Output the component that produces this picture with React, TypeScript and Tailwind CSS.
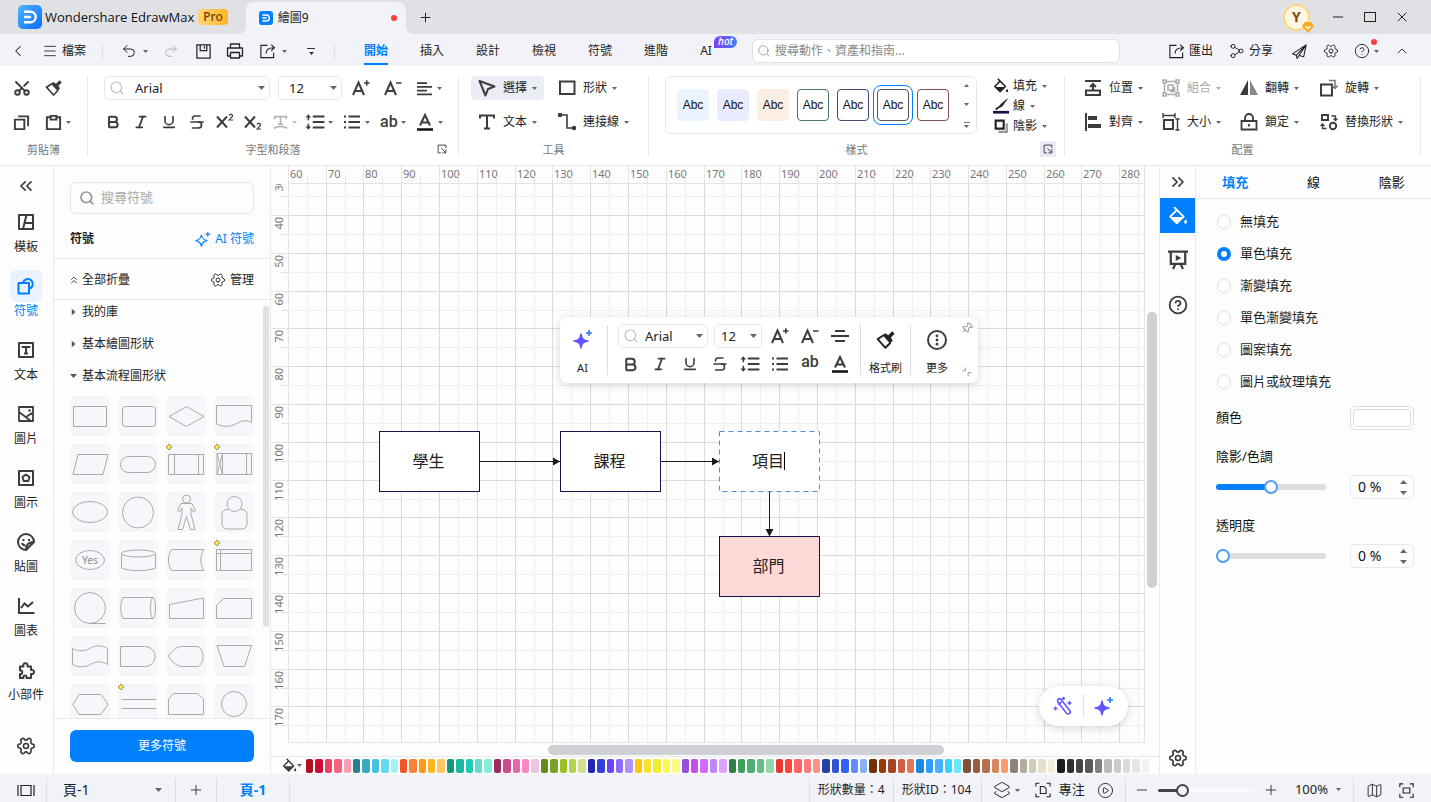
import { useState } from "react";
import type { ReactNode } from "react";
import clsx from "clsx";
import {
  Bold,
  ChevronLeft,
  ChevronsLeft,
  ChevronsRight,
  ChevronsUp,
  ChevronUp,
  CircleHelp,
  CirclePlay,
  Italic,
  Layers2,
  Map as MapIcon,
  Menu,
  Minus,
  Pin,
  Plus,
  Redo2,
  Scissors,
  Search,
  Settings,
  Share2,
  Strikethrough,
  Underline,
  Undo2,
  X,
} from "lucide-react";

/* ---------- small pieces ---------- */

type IconProps = { size?: number; width?: number; className?: string; children: ReactNode };

function Icon({ size = 18, width = 2, className, children }: IconProps) {
  return (
    <svg
      width={size}
      height={size}
      viewBox="0 0 18 18"
      fill="none"
      stroke="currentColor"
      strokeWidth={width}
      className={clsx("shrink-0", className)}
    >
      {children}
    </svg>
  );
}

function Caret({ up = false, big = false, className }: { up?: boolean; big?: boolean; className?: string }) {
  return (
    <svg
      width={big ? 7 : 5}
      height={big ? 4 : 3}
      viewBox="0 0 6 4"
      preserveAspectRatio="none"
      className={clsx("pointer-events-none shrink-0", className ?? "text-[#666]")}
    >
      <path d={up ? "M0 4L3 0L6 4z" : "M0 0h6L3 4z"} fill="currentColor" />
    </svg>
  );
}

function Divider({ className }: { className?: string }) {
  return <span className={clsx("w-px shrink-0 bg-[#dcdee6]", className)} />;
}

function Spark({ size = 20, outline = false }: { size?: number; outline?: boolean }) {
  const star = "M8 5C8.8 9.6 10.4 11.2 15 12C10.4 12.8 8.8 14.4 8 19C7.2 14.4 5.6 12.8 1 12C5.6 11.2 7.2 9.6 8 5z";
  const plus = "M16 1C16.3 3.2 16.8 3.7 19 4C16.8 4.3 16.3 4.8 16 7C15.7 4.8 15.2 4.3 13 4C15.2 3.7 15.7 3.2 16 1z";
  return (
    <svg width={size} height={size} viewBox="0 0 20 20" fill="none" className="shrink-0">
      <defs>
        <linearGradient id="spark" x1="0" y1="1" x2="1" y2="0">
          <stop offset="0" stopColor="#8a4bff" />
          <stop offset="1" stopColor="#3b5bff" />
        </linearGradient>
      </defs>
      {outline ? (
        <path d={star} stroke="#0080ff" strokeWidth="1.5" strokeLinejoin="round" />
      ) : (
        <path d={star} fill="url(#spark)" stroke="url(#spark)" strokeWidth="1.4" strokeLinejoin="round" />
      )}
      <path d={plus} fill="#2f7bff" stroke="#2f7bff" strokeWidth={outline ? 0.8 : 1} />
    </svg>
  );
}

function Logo({ size }: { size: number }) {
  return (
    <svg width={size} height={size} viewBox="0 0 24 24" className="shrink-0">
      <defs>
        <linearGradient id="logo" x1="0" y1="0" x2="1" y2="1">
          <stop offset="0" stopColor="#4db4ff" />
          <stop offset="1" stopColor="#0a6cff" />
        </linearGradient>
      </defs>
      <rect width="24" height="24" rx="5" fill={size > 20 ? "url(#logo)" : "#0080ff"} />
      <path d="M6 6.8h6.5a5.2 5.2 0 0 1 0 10.4H6M6 12h7" fill="none" stroke="#fff" strokeWidth="2.4" />
    </svg>
  );
}

function Brush({ size = 18 }: { size?: number }) {
  return (
    <Icon size={size} width={1.7}>
      <path d="M6.5 5L1.5 8.2L8.5 16L13 11.5" strokeLinejoin="round" />
      <path d="M5.8 4.6L8.4 3L11 4.8L14.6 1.2L16.8 3.4L13.4 6.8L15 9.6L12.6 12.2z" fill="currentColor" stroke="none" />
    </Icon>
  );
}

function Bucket({ size = 16 }: { size?: number }) {
  return (
    <Icon size={size} width={1.7}>
      <path d="M5.5 1L14 9.5L8 15.5L2 9.5L8 3.5" strokeLinejoin="round" />
      <path d="M2.5 10h11L8 15z" fill="currentColor" stroke="none" />
      <path d="M15.8 12c1 1.4 1.3 2 1.3 2.6a1.3 1.3 0 0 1-2.6 0c0-.6.4-1.2 1.3-2.6z" fill="currentColor" stroke="none" />
    </Icon>
  );
}

function FontGrow({ sign }: { sign: "plus" | "minus" }) {
  return (
    <Icon>
      <path d="M1 16L6.5 3.5L12 16M3 12h7" />
      <path d={sign === "plus" ? "M12 4h5.5M14.8 1.2v5.5" : "M12 4h5.5"} strokeWidth="1.5" />
    </Icon>
  );
}

function Script({ low = false }: { low?: boolean }) {
  return (
    <Icon>
      <path d="M1 3.5l10 11M11 3.5l-10 11" />
      <path
        d={low ? "M13 11.5c.5-1.7 4-1.5 3.5.5c-.3 1.2-2.5 2.5-3.5 4h4" : "M13 2.5c.5-1.7 4-1.5 3.5.5c-.3 1.2-2.5 2.5-3.5 4h4"}
        strokeWidth="1.2"
      />
    </Icon>
  );
}

function LineSpacing() {
  return (
    <Icon size={20} width={1.9}>
      <path d="M7 4h10.5M7 9h10.5M7 14h10.5" />
      <path d="M3 3.5v4M3 10.5v4" strokeWidth="1.4" />
      <path d="M.5 5L3 2L5.5 5zM.5 13L3 16L5.5 13z" fill="currentColor" stroke="none" />
    </Icon>
  );
}

function ListIcon() {
  return (
    <Icon width={1.8}>
      <path d="M5.5 3.5H17M5.5 9H17M5.5 14.5H17M1 3.5h2M1 9h2M1 14.5h2" />
    </Icon>
  );
}

function FontColor() {
  return (
    <Icon>
      <path d="M4 12.5L9 2L14 12.5M5.8 9.5h6.4" />
      <path d="M1 16.5h16" stroke="#111" strokeWidth="2.5" />
    </Icon>
  );
}

function ExportIcon() {
  return (
    <Icon size={17} width={1.2}>
      <path d="M9 2.5H2v13h13.5V10" />
      <path d="M7.5 11C7.5 7 10 5 16 5M13 1.8L16.3 5L13 8.2" />
    </Icon>
  );
}

function SelectBox(props: { label: string; value: string; search?: boolean; compact?: boolean; className: string }) {
  return (
    <div className={clsx("flex h-6 items-center rounded-[5px] border border-[#e6e7ec] bg-white pr-1", props.className)}>
      {props.search && <Search size={16} strokeWidth={1.6} className="ml-1 shrink-0 text-[#bbb]" />}
      <select
        aria-label={props.label}
        defaultValue={props.value}
        className={clsx(
          "min-w-0 flex-1 appearance-none bg-transparent text-[13px] leading-5 text-[#222] outline-none",
          props.compact ? "pl-1.5" : "pl-2.5",
        )}
      >
        <option>{props.value}</option>
      </select>
      <Caret big />
    </div>
  );
}

/* ---------- title and menu bars ---------- */

function TitleBar() {
  return (
    <header className="flex h-[34px] shrink-0 items-center bg-[#e0e1e5] pl-[18px]">
      <Logo size={24} />
      <span className="ml-[3px] font-['Open_Sans'] text-[13px] leading-5 text-[#111]">Wondershare EdrawMax</span>
      <span className="ml-1 h-4 rounded bg-[linear-gradient(90deg,#ffd778,#ffb526)] px-[5px] text-xs leading-4 font-medium text-[#6b3d00]">
        Pro
      </span>
      <div className="relative ml-[18px] flex h-8 w-40 items-center gap-[5px] self-end rounded-t-lg bg-[#f2f3f9] px-[13px] pr-[9px] text-xs text-[#222] before:absolute before:bottom-0 before:-left-2 before:size-2 before:bg-[radial-gradient(circle_at_0_0,#e0e1e5_8px,#f2f3f9_8px)] after:absolute after:-right-2 after:bottom-0 after:size-2 after:bg-[radial-gradient(circle_at_100%_0,#e0e1e5_8px,#f2f3f9_8px)]">
        <Logo size={14} />
        <span>繪圖9</span>
        <span className="ml-auto size-1.5 rounded-full bg-[#ff3b3b]" />
      </div>
      <button type="button" aria-label="新增分頁" className="ml-3 text-[#222]">
        <Plus size={15} strokeWidth={1.6} />
      </button>
      <div className="ml-auto flex items-center">
        <button
          type="button"
          className="relative mr-3 size-[27px] rounded-full border-2 border-[#ffd57c] bg-[#fff7e2] text-sm leading-[22px] font-bold text-[#7a4a12]"
        >
          Y
          <svg width="12" height="11" viewBox="0 0 12 11" className="absolute -right-1.5 -bottom-1">
            <path d="M3 0h6l3 4-6 7-6-7z" fill="#ffa51e" />
            <path d="M3.5 4L6 6.5L8.5 4" fill="none" stroke="#fff" strokeWidth="1.3" />
          </svg>
        </button>
        <button type="button" aria-label="最小化" className="flex w-8 justify-center"><Minus size={16} strokeWidth={1.3} /></button>
        <button type="button" aria-label="最大化" className="flex w-8 justify-center">
          <span className="h-[10px] w-3 border border-[#222]" />
        </button>
        <button type="button" aria-label="關閉" className="mr-[13px] flex w-8 justify-center"><X size={16} strokeWidth={1.3} /></button>
      </div>
    </header>
  );
}

const menuTabs = ["開始", "插入", "設計", "檢視", "符號", "進階"];

function MenuBar() {
  return (
    <nav className="flex h-8 shrink-0 items-center bg-[#f2f3f9] pt-0.5 text-xs text-[#222]">
      <button type="button" aria-label="返回" className="flex w-9 justify-center"><ChevronLeft size={18} strokeWidth={1.4} /></button>
      <button type="button" className="flex items-center gap-1 px-1.5">
        <Menu size={16} strokeWidth={1.3} />
        檔案
      </button>
      <Divider className="ml-[10px] h-4" />
      <button type="button" aria-label="復原" className="ml-[18px] flex w-[34px] items-center gap-1.5">
        <Undo2 size={16} strokeWidth={1.5} />
        <Caret />
      </button>
      <button type="button" aria-label="重做" className="flex w-8 justify-center text-[#b4b5ba]"><Redo2 size={16} strokeWidth={1.5} /></button>
      <button type="button" aria-label="儲存" className="flex w-8 justify-center">
        <Icon size={17} width={1.3}>
          <path d="M2 2h14v14H2zM5.5 2v6h7V2M10 3.5v2.5" />
        </Icon>
      </button>
      <button type="button" aria-label="列印" className="flex w-8 justify-center">
        <Icon size={18} width={1.3}>
          <path d="M4.5 6V2h9v4M4.5 14H1.5V6h15v8h-3M4.5 10.5h9V16h-9z" strokeLinejoin="round" />
        </Icon>
      </button>
      <button type="button" aria-label="分享檔案" className="ml-2 flex items-center gap-1.5"><ExportIcon /><Caret /></button>
      <button type="button" aria-label="自訂" className="ml-[19px] flex w-2.5 flex-col items-center gap-[3px]">
        <span className="h-px w-2 bg-[#333]" />
        <Caret className="text-[#333]" />
      </button>
      <Divider className="ml-[18px] h-4" />
      <div className="ml-[13px] flex h-full">
        {menuTabs.map((tab, i) => (
          <button
            key={tab}
            type="button"
            className={clsx("relative h-full w-14", i === 0 && "font-bold text-[#0080ff]")}
          >
            {tab}
            {i === 0 && <span className="absolute bottom-px left-4 h-[2px] w-6 bg-[#0080ff]" />}
          </button>
        ))}
        <button type="button" className="relative h-full w-14 pr-3">
          AI
          <span className="absolute top-0 left-[30px] h-3 rounded-[6px] rounded-bl-none bg-[linear-gradient(90deg,#7b3ff5,#3f80ff)] px-1 text-[10px] leading-[11px] font-medium text-white italic">
            hot
          </span>
        </button>
      </div>
      <label className="ml-3 flex h-6 w-[368px] items-center gap-1 rounded-md border border-[#dfe1e8] bg-white px-1">
        <Search size={14} strokeWidth={1.5} className="text-[#999]" />
        <input aria-label="搜尋" placeholder="搜尋動作、資產和指南..." className="flex-1 outline-none placeholder:text-[#888]" />
      </label>
      <div className="ml-auto flex items-center">
        <button type="button" className="flex items-center gap-1"><ExportIcon />匯出</button>
        <button type="button" className="ml-4 flex items-center gap-1"><Share2 size={16} strokeWidth={1.4} className="-scale-x-100" />分享</button>
        <button type="button" aria-label="傳送" className="ml-[10px] flex w-8 justify-center">
          <Icon size={17} width={1.1}>
            <path d="M16 2L1.5 11.5L5.5 13L16 2L13.5 14.5L8.5 13.2M5.5 13l1 3.5l2-3.3L16 2" strokeLinejoin="round" />
          </Icon>
        </button>
        <button type="button" aria-label="設定" className="flex w-8 justify-center"><Settings size={16} strokeWidth={1.4} className="rotate-90" /></button>
        <button type="button" aria-label="說明" className="relative ml-[7px] flex items-center gap-1">
          <CircleHelp size={16} strokeWidth={1.4} />
          <Caret />
          <span className="absolute -top-1 right-0.5 size-1.5 rounded-full bg-[#ff3b3b]" />
        </button>
        <button type="button" aria-label="收合" className="mr-[21px] ml-[15px]"><ChevronUp size={16} strokeWidth={1.4} /></button>
      </div>
    </nav>
  );
}

/* ---------- ribbon ---------- */

function Group({ label, className, launcher, children }: { label: string; className?: string; launcher?: ReactNode; children: ReactNode }) {
  return (
    <section className={clsx("flex h-20 flex-col border-r border-[#e8e9ee]", className)}>
      <div className="h-[66px] shrink-0">{children}</div>
      <h2 className="relative flex h-[14px] shrink-0 items-center justify-center pt-0.5 text-[11px] leading-4 text-[#777]">
        {label}
        {launcher}
      </h2>
    </section>
  );
}

function Launcher({ active = false }: { active?: boolean }) {
  return (
    <button
      type="button"
      aria-label="更多設定"
      className={clsx("absolute -top-px right-2 flex size-4 items-center justify-center text-[#333]", active && "bg-[#e9ecf5]")}
    >
      <Icon size={10} width={1.6}>
        <path d="M7 16H2V2h14v5M8 8l7 7M9.5 16H16V9.5" />
      </Icon>
    </button>
  );
}

function ToolButton(props: { icon: ReactNode; label: string; active?: boolean; disabled?: boolean }) {
  return (
    <button
      type="button"
      disabled={props.disabled}
      className={clsx(
        "flex h-6 items-center justify-self-start rounded px-[7px] whitespace-nowrap",
        props.active && "bg-[#ebedf5]",
        props.disabled && "text-[#aaa]",
      )}
    >
      <span className={clsx("mr-[7px] flex w-[18px] justify-center", !props.disabled && "text-[#3c3c3c]")}>{props.icon}</span>
      {props.label}
      <Caret className={clsx("ml-[5px]", props.disabled ? "text-[#aaa]" : "text-[#666]")} />
    </button>
  );
}

const swatches = [
  "bg-[#ebf3ff] border-[#ebf3ff]",
  "bg-[#ebebff] border-[#ebebff]",
  "bg-[#fdeee4] border-[#fdeee4]",
  "bg-white border-[#4b766b]",
  "bg-white border-[#3f4b74]",
  "bg-white border-[#555] outline-1 outline-offset-[3px] outline-[#0080ff]",
  "bg-white border-[#7d5053]",
];

function Ribbon() {
  return (
    <div className="flex h-[100px] shrink-0 border-b border-[#e8e9ee] bg-white pt-[10px] pr-[10px] text-xs text-[#222]">
      <Group label="剪貼簿" className="w-[88px]">
        <div className="grid grid-cols-[32px_auto] gap-y-[10px] pl-[13px] text-[#3c3c3c]">
          <button type="button" aria-label="剪下" className="h-6"><Scissors size={18} strokeWidth={2.5} className="-rotate-90" /></button>
          <button type="button" aria-label="格式刷" className="h-6"><Brush /></button>
          <button type="button" aria-label="複製" className="h-6">
            <Icon size={17}><path d="M2 6h10v10H2zM5.5 2.5H16V13" /></Icon>
          </button>
          <button type="button" aria-label="貼上" className="flex h-6 items-center gap-1">
            <Icon size={17}><path d="M5.5 3.5h-3.5v12.5h14V3.5h-3.5M6 2h6v4H6z" /></Icon>
            <Caret />
          </button>
        </div>
      </Group>

      <Group label="字型和段落" className="w-[371px]" launcher={<Launcher />}>
        <div className="flex items-center pl-4 text-[#3c3c3c]">
          <SelectBox label="字型" value="Arial" search className="w-[166px]" />
          <SelectBox label="字號" value="12" className="ml-2 w-16" />
          <button type="button" aria-label="放大字型" className="ml-[3px] flex w-8 justify-center"><FontGrow sign="plus" /></button>
          <button type="button" aria-label="縮小字型" className="flex w-8 justify-center"><FontGrow sign="minus" /></button>
          <button type="button" aria-label="對齊" className="ml-2 flex items-center gap-[5px]">
            <Icon size={15}><path d="M0 2.5h12M0 7h18M0 11.5h12M0 16h18" /></Icon>
            <Caret />
          </button>
        </div>
        <div className="mt-[10px] flex h-6 items-center pl-[11px] text-[#3c3c3c]">
          <button type="button" aria-label="粗體" className="flex w-7 justify-center"><Bold size={16} strokeWidth={2.9} /></button>
          <button type="button" aria-label="斜體" className="flex w-7 justify-center"><Italic size={16} strokeWidth={2.6} /></button>
          <button type="button" aria-label="底線" className="flex w-7 justify-center"><Underline size={16} strokeWidth={2.5} /></button>
          <button type="button" aria-label="刪除線" className="flex w-7 justify-center"><Strikethrough size={18} strokeWidth={2.3} /></button>
          <button type="button" aria-label="上標" className="flex w-7 justify-center"><Script /></button>
          <button type="button" aria-label="下標" className="flex w-7 justify-center"><Script low /></button>
          <button type="button" aria-label="文字效果" className="ml-1.5 flex items-center gap-1 text-[#b4b4b4]">
            <Icon size={15}><path d="M2 5V2h14v3M9 2v9M6 11h6M1 16c5-3 11-3 16 0" /></Icon>
            <Caret className="text-[#bbb]" />
          </button>
          <button type="button" aria-label="行距" className="ml-2 flex items-center gap-[3px]"><LineSpacing /><Caret /></button>
          <button type="button" aria-label="項目符號" className="ml-[10px] flex items-center gap-1">
            <ListIcon />
            <Caret />
          </button>
          <button type="button" aria-label="大小寫" className="ml-[10px] flex items-center gap-[3px] font-['Roboto'] text-base leading-5 font-medium">
            ab
            <Caret />
          </button>
          <button type="button" aria-label="字型顏色" className="ml-2.5 flex items-center gap-1"><FontColor /><Caret /></button>
        </div>
      </Group>

      <Group label="工具" className="w-[190px]">
        <div className="grid grid-cols-[80px_auto] gap-y-[10px] pl-3">
          <ToolButton
            active
            label="選擇"
            icon={<Icon><path d="M1.5 2L16.5 7.5L10 10L7.5 16.5z" strokeLinejoin="round" /></Icon>}
          />
          <ToolButton label="形狀" icon={<Icon><path d="M2 2.5h14.5v12.5H2z" /></Icon>} />
          <ToolButton label="文本" icon={<Icon><path d="M2 5.5V2.5h14v3M9 2.5v13M6 15.5h6" /></Icon>} />
          <ToolButton
            label="連接線"
            icon={
              <Icon width={1.6}>
                <path d="M2 2h7v13h7" />
                <circle cx="2" cy="2" r="1.5" fill="currentColor" />
                <circle cx="16" cy="15" r="1.5" fill="currentColor" />
              </Icon>
            }
          />
        </div>
      </Group>

      <Group label="樣式" className="flex-1" launcher={<Launcher active />}>
        <div className="flex pl-4">
          <div className="flex h-[58px] w-[312px] items-center gap-2 rounded-md border border-[#e6e7ec] pl-[11px]">
            {swatches.map((s) => (
              <button key={s} type="button" className={clsx("size-8 shrink-0 rounded border font-['Liberation_Sans'] text-xs text-[#111]", s)}>
                Abc
              </button>
            ))}
            <div className="flex flex-1 flex-col items-center gap-4 pt-0.5">
              <Caret up />
              <Caret />
              <span className="flex flex-col items-center gap-0.5">
                <span className="h-px w-1.5 bg-[#777]" />
                <Caret />
              </span>
            </div>
          </div>
          <div className="ml-4 flex flex-col">
            <button type="button" className="flex h-5 items-center gap-1"><Bucket />填充<Caret className="ml-px text-[#666]" /></button>
            <button type="button" className="flex h-5 items-center gap-1">
              <Icon size={16}>
                <path d="M16 1L9 7L6 11L10 9.5z" fill="currentColor" strokeWidth="1" />
                <path d="M0 16h18" stroke="#10164b" strokeWidth="3" />
                <path d="M3 13l4-3" />
              </Icon>
              線
              <Caret className="ml-px text-[#666]" />
            </button>
            <button type="button" className="flex h-5 items-center gap-1">
              <Icon size={16}>
                <path d="M6 15.5h9.5V6" stroke="#999" strokeWidth="2.5" />
                <path d="M3 3h9v9H3z" strokeWidth="2.4" />
              </Icon>
              陰影
              <Caret className="ml-px text-[#666]" />
            </button>
          </div>
        </div>
      </Group>

      <Group label="配置" className="w-[356px]">
        <div className="grid grid-cols-[78px_78px_80px_auto] gap-y-[10px] pl-3">
          <ToolButton label="位置" icon={<Icon><path d="M1 2h16M2 11.5h14v4.5H2zM9 11V5.5M6 8l3-3l3 3" /></Icon>} />
          <ToolButton
            disabled
            label="組合"
            icon={<Icon width={1.5}><path d="M1 1h3v3H1zM14 1h3v3h-3zM1 14h3v3H1zM14 14h3v3h-3zM4 2.5h10M4 15.5h10M2.5 4v10M15.5 4v10M6 6h5v5H6zM12.5 8v4.5H8" /></Icon>}
          />
          <ToolButton
            label="翻轉"
            icon={
              <Icon>
                <path d="M8 1v15H0z" fill="currentColor" stroke="none" />
                <path d="M10 1v15H18z" fill="#888" stroke="none" />
              </Icon>
            }
          />
          <ToolButton label="旋轉" icon={<Icon><path d="M1 5.5h11v11H1z" /><path d="M9 1.5h6v7M12 6.5l3 3l3-3" stroke="#777" strokeWidth="1.5" /></Icon>} />
          <ToolButton label="對齊" icon={<Icon><path d="M2 0v18M5 4h7v2H5zM5 12h11v2H5z" /></Icon>} />
          <ToolButton label="大小" icon={<Icon><path d="M2 7h9v9H2z" /><path d="M1 2.5h12M1 0v5M13 0v5M15.5 6v11M13.5 6h4M13.5 17h4" strokeWidth="1.4" /></Icon>} />
          <ToolButton label="鎖定" icon={<Icon width={1.8}><path d="M1.5 8h15v8.5h-15zM5 8V5a4 4 0 0 1 8 0v3M9 11v2.5" /></Icon>} />
          <ToolButton
            label="替換形狀"
            icon={
              <Icon width={1.9}>
                <path d="M2 2h6v5H2z" />
                <circle cx="13" cy="13" r="3.2" />
                <path d="M11.5 3h4v4M13.5 5.5l2 2l2-2M6.5 15.5h-4v-4M.5 13l2-2l2 2" strokeWidth="1.3" />
              </Icon>
            }
          />
        </div>
      </Group>
    </div>
  );
}

/* ---------- left rail and symbol library ---------- */

const railItems: { label: string; icon: ReactNode }[] = [
  { label: "模板", icon: <path d="M2 2h14v14H2zM9.5 2L6 16M8 10h8" strokeLinejoin="round" /> },
  { label: "符號", icon: <path d="M1.5 6h10.5v10.5H1.5zM6 5.5A5 5 0 1 1 13 11.5" strokeLinejoin="round" /> },
  { label: "文本", icon: <path d="M2 2h14v14H2zM5.5 7V6h7v1M9 6v6.5M7 12.5h4" strokeLinejoin="round" /> },
  {
    label: "圖片",
    icon: (
      <>
        <path d="M2 2h14v14H2zM2 7l12 9M9 12l6-4" strokeLinejoin="round" strokeWidth="1.8" />
        <circle cx="12.5" cy="5.5" r="1.2" fill="currentColor" stroke="none" />
      </>
    ),
  },
  { label: "圖示", icon: <path d="M2 2h14v14H2zM9 5.5L12.5 8L11.3 12H6.7L5.5 8z" strokeLinejoin="round" /> },
  { label: "貼圖", icon: <path d="M17 9A8 8 0 1 0 9 17zM17 9c-5 0-8 3-8 8M5.5 7h2M11 7h2M5 10c.5 1.5 2 2.5 3.5 2.5" strokeLinejoin="round" /> },
  { label: "圖表", icon: <path d="M2 1v15h15.5M4 11L7.5 6.5L11 9.5L16 5" /> },
  { label: "小部件", icon: <path d="M3 5.5h3.5C5 1 11.5 1 10.5 5.5H14V9c4-1 4 5 0 4v4H9.5c1-3.5-4-3.5-3 0H3v-4c3 1 3-4.5 0-3.5z" strokeLinejoin="round" /> },
];

function LeftRail() {
  const [current, setCurrent] = useState("符號");
  return (
    <aside className="flex w-[54px] shrink-0 flex-col items-center border-r border-[#e8e9ee] pr-px text-xs text-[#222]">
      <button type="button" aria-label="收合面板" className="flex h-10 items-center text-[#3c3c3c]"><ChevronsLeft size={20} /></button>
      {railItems.map((item) => (
        <button
          key={item.label}
          type="button"
          onClick={() => setCurrent(item.label)}
          className={clsx("flex h-16 flex-col items-center", item.label === current && "text-[#0080ff]")}
        >
          <span
            className={clsx(
              "flex size-8 items-center justify-center rounded-md",
              item.label === current ? "bg-[#e8f3ff]" : "text-[#3c3c3c]",
            )}
          >
            <Icon>{item.icon}</Icon>
          </span>
          <span className="leading-[18px]">{item.label}</span>
        </button>
      ))}
      <button type="button" aria-label="設定" className="mt-auto mb-[18px] text-[#3c3c3c]"><Settings size={20} className="rotate-90" /></button>
    </aside>
  );
}

const marker = <path d="M3 0L6 3L3 6L0 3z" fill="#ffe14d" stroke="#8a7a2a" strokeWidth="0.8" />;

const shapes: ReactNode[] = [
  <path d="M3.5 10.5h33v20h-33z" />,
  <rect x="4.5" y="10.5" width="33" height="20" rx="3" />,
  <path d="M3 20.5L20.5 10.5L38 20.5L20.5 30.5z" />,
  <path d="M2.5 9.5h35v17c-9-5-14 2-21 3.5c-5 1-10 0-14-2z" />,
  <path d="M8 10.5h30l-5 20H3z" />,
  <rect x="2.5" y="12.5" width="35" height="16" rx="8" />,
  <><path d="M2.5 10.5h35v20h-35zM8.5 10.5v20M32.5 10.5v20" />{marker}</>,
  <><path d="M3 9.5h34.5v21H3zM8.5 9.5v21M32.5 9.5v21M3 9.5l5.5 21M8.5 9.5L3 30.5" />{marker}</>,
  <ellipse cx="20" cy="20" rx="17.5" ry="10.5" />,
  <circle cx="20" cy="20.5" r="15.5" />,
  <><circle cx="20.5" cy="7" r="4" /><path d="M15 11.5h11l3.5 7l-2 1.5l-2.5-4v6l4 15.5h-4.5l-4-13l-4 13H12l4-15.5v-6l-2.5 4l-2-1.5z" /></>,
  <><circle cx="20.5" cy="12" r="7.5" /><path d="M14.5 17.5H13a5 5 0 0 0-5 5V32a5 5 0 0 0 5 5h15a5 5 0 0 0 5-5v-9.5a5 5 0 0 0-5-5h-1.5" /></>,
  <>
    <ellipse cx="20" cy="20" rx="14.5" ry="9.5" />
    <text x="20" y="24" textAnchor="middle" fontSize="10" fontWeight="500" fill="#999" stroke="none">Yes</text>
  </>,
  <><ellipse cx="20.5" cy="13.5" rx="17" ry="3.5" /><path d="M3.5 13.5V28c8 3.5 26 3.5 34 0V13.5" /></>,
  <path d="M5.5 9.5h32c-3.5 6-3.5 15 0 21h-32c-4-6-4-15 0-21z" />,
  <><path d="M2.5 9.5h35v21h-35zM2.5 13.5h35M6.5 9.5v21" />{marker}</>,
  <><circle cx="20" cy="20" r="15.5" /><path d="M20 35.5h15.5" /></>,
  <><path d="M35.5 9.5H5c-3 6-3 15 0 21h30.5" /><ellipse cx="35" cy="20" rx="2.5" ry="10.5" /></>,
  <path d="M3.5 16.5L37.5 10v20.5h-34z" />,
  <path d="M9.5 10.5h28v20h-35v-13z" />,
  <path d="M2.5 12.5c5 3 12 3 17 0s12-4 18 0v16c-6-4-12-3-17 0s-13 3-18 0z" />,
  <path d="M2.5 10.5h24c14 0 14 20 0 20h-24z" />,
  <path d="M2.5 20c3-5 8-9.5 14-9.5h16c6 4 6 16 0 20h-16c-6 0-11-5-14-10.5z" />,
  <path d="M3 9.5h34.5l-7 21H10z" />,
  <path d="M3 20.5L9 10.5h22l7 10l-7 10H9z" />,
  <><path d="M3.5 15.5h34.5M3.5 24.5h34.5" />{marker}</>,
  <path d="M7.5 9.5h24l6 5.5v15.5h-35V15z" />,
  <circle cx="20" cy="20" r="12.5" />,
];

function SymbolPanel() {
  return (
    <aside className="flex w-[217px] shrink-0 flex-col border-r border-[#e8e9ee] text-xs text-[#222]">
      <label className="mx-4 mt-4 flex h-8 shrink-0 items-center gap-1.5 rounded-md border border-[#e4e5ea] px-2">
        <Search size={16} strokeWidth={2.6} className="text-[#999]" />
        <input aria-label="搜尋符號" placeholder="搜尋符號" className="w-0 flex-1 text-[13px] outline-none placeholder:text-[#aaa]" />
      </label>
      <div className="flex h-[45px] shrink-0 items-center justify-between border-b border-[#e8e9ee] px-4 pt-[5px]">
        <h2 className="font-bold">符號</h2>
        <button type="button" className="flex items-center gap-1 text-[#0080ff]"><Spark size={16} outline />AI 符號</button>
      </div>
      <div className="flex h-[41px] shrink-0 items-center justify-between border-b border-[#e8e9ee] px-4 pt-px">
        <button type="button" className="flex items-center"><ChevronsUp size={12} strokeWidth={1.6} className="-ml-0.5 mr-0.5" />全部折疊</button>
        <button type="button" className="flex items-center gap-1"><Settings size={16} strokeWidth={1.4} className="rotate-90" />管理</button>
      </div>
      <div className="flex min-h-0 flex-1">
        <div className="min-w-0 flex-1 overflow-hidden pl-4">
          {["我的庫", "基本繪圖形狀", "基本流程圖形狀"].map((name, i) => (
            <button key={name} type="button" className="mb-2 flex h-6 items-center">
              <span className="flex w-3">
                <Caret big className={clsx("text-[#555]", i < 2 && "-rotate-90")} />
              </span>
              {name}
            </button>
          ))}
          <div className="grid grid-cols-[repeat(4,40px)] gap-2">
            {shapes.map((shape, i) => (
              <button key={i} type="button" aria-label={`形狀 ${i + 1}`} className="size-10 rounded-[5px] bg-[#f6f7fb]">
                <svg width="40" height="40" viewBox="0 0 40 40" fill="none" stroke="#aaa">
                  {shape}
                </svg>
              </button>
            ))}
          </div>
        </div>
        <div className="flex w-2 justify-center pt-1.5"><span className="h-[321px] w-1.5 rounded-full bg-[#dfe0e5]" /></div>
      </div>
      <div className="shrink-0 border-t border-[#e8e9ee] px-4 pt-[11px] pb-3">
        <button type="button" className="h-8 w-full rounded-md bg-[#0080ff] text-white">更多符號</button>
      </div>
    </aside>
  );
}

/* ---------- canvas ---------- */

// 10 mm at 96 dpi
const STEP = 37.795;
const ruler = (count: number, offset: number) => Array.from({ length: count }, (_, i) => Math.floor(i * STEP - offset));
const linesX = ruler(48, 0.7);
const linesY = ruler(30, 6.2);
const labelsX = linesX.slice(0, 23);
const labelsY = linesY.slice(0, 15);

function Grid() {
  const vertical = (shift: number) => linesX.map((x) => `M${x + shift + 0.5} 0V1200`).join("");
  const horizontal = (shift: number) => linesY.map((y) => `M0 ${y + shift + 0.5}H1800`).join("");
  return (
    <svg width="100%" height="100%" className="absolute inset-0" fill="none" shapeRendering="crispEdges">
      <path stroke="#efeff1" d={vertical(19) + horizontal(19)} />
      <path stroke="#dadada" d={vertical(0) + horizontal(0)} />
    </svg>
  );
}

function Connectors() {
  return (
    <svg width="560" height="430" className="absolute inset-0" fill="#1a1a1a" stroke="#1a1a1a">
      <path d="M191 277.5h80M372 277.5h58M480.5 308v44" />
      <path stroke="none" d="M264 273.5v8l7-4zM423 273.5v8l7-4zM476.5 345h8l-4 7.5z" />
      <rect x="430.5" y="247.5" width="100" height="60" fill="none" stroke="#4a90d9" strokeDasharray="5 4" />
    </svg>
  );
}

const node = "absolute flex h-[61px] w-[101px] items-center justify-center pr-0.5 pb-0.5 text-base text-[#222]";

function FloatingToolbar() {
  return (
    <div className="absolute top-[133px] left-[271px] flex h-[66px] w-[418px] rounded-lg bg-white text-[#3c3c3c] shadow-[0_2px_8px_rgba(0,0,0,0.14)]">
      <button type="button" className="flex w-[47px] flex-col items-center pt-3 pr-0.5 text-[11px] leading-4 text-[#222]">
        <Spark />
        <span className="mt-[11px]">AI</span>
      </button>
      <Divider className="mt-2 h-[50px]" />
      <div className="w-[252px] pl-2.5">
        <div className="flex items-center pt-[7px]">
          <SelectBox label="字型" value="Arial" search compact className="w-[90px]" />
          <SelectBox label="字號" value="12" compact className="ml-1.5 w-12" />
          <button type="button" aria-label="放大字型" className="ml-[3px] flex w-[30px] justify-center"><FontGrow sign="plus" /></button>
          <button type="button" aria-label="縮小字型" className="flex w-[30px] justify-center"><FontGrow sign="minus" /></button>
          <button type="button" aria-label="置中" className="flex w-[30px] justify-center">
            <Icon><path d="M4 4h10M0 9h18M4 14h10" /></Icon>
          </button>
        </div>
        <div className="-ml-[3px] flex h-8 items-center">
          <button type="button" aria-label="粗體" className="flex w-[30px] justify-center"><Bold size={17} strokeWidth={2.8} /></button>
          <button type="button" aria-label="斜體" className="flex w-[30px] justify-center"><Italic size={16} strokeWidth={2.5} /></button>
          <button type="button" aria-label="底線" className="flex w-[30px] justify-center"><Underline size={16} strokeWidth={2.4} /></button>
          <button type="button" aria-label="刪除線" className="flex w-[30px] justify-center"><Strikethrough size={18} strokeWidth={2.1} /></button>
          <button type="button" aria-label="行距" className="flex w-[30px] justify-center"><LineSpacing /></button>
          <button type="button" aria-label="項目符號" className="flex w-[30px] justify-center"><ListIcon /></button>
          <button type="button" aria-label="大小寫" className="w-[30px] pb-1 font-['Roboto'] text-base leading-5 font-medium">ab</button>
          <button type="button" aria-label="字型顏色" className="flex w-[30px] justify-center"><FontColor /></button>
        </div>
      </div>
      <Divider className="mt-2 h-[50px]" />
      <button type="button" className="flex w-[49px] flex-col items-center pt-[13px] text-[11px] leading-4 text-[#222]">
        <Brush size={20} />
        <span className="mt-[10px]">格式刷</span>
      </button>
      <Divider className="mt-2 h-[50px]" />
      <button type="button" className="flex w-[52px] flex-col items-center pt-3 text-[11px] leading-4 text-[#222]">
        <svg width="22" height="22" viewBox="0 0 22 22" className="text-[#3c3c3c]" fill="currentColor">
          <circle cx="11" cy="11" r="9" fill="none" stroke="currentColor" strokeWidth="2" />
          <circle cx="11" cy="6.8" r="1.4" />
          <circle cx="11" cy="11" r="1.4" />
          <circle cx="11" cy="15.2" r="1.4" />
        </svg>
        <span className="mt-[9px]">更多</span>
      </button>
      <div className="-ml-3 flex flex-1 flex-col items-center justify-between pt-[5px] pb-1.5 pl-1 text-[#999]">
        <Pin size={12} strokeWidth={2} className="rotate-45" />
        <Icon size={10} width={1.8}><path d="M1 7h5V1M17 10h-6v7" /></Icon>
      </div>
    </div>
  );
}

const palette = (
  "b0111e cc0c31 ea4462 f7637f fa9db0 2a7f8f 3aa9c4 45c1df 63d9f2 a5effc f35325 ff8038 ff981d ffb61a ffc661 " +
  "14957e 1ab89e 1eccb4 6ad9c8 84ecda 9c2c5f c94d8c e465ab fb86c8 f0c3dc 638a15 77a127 9bc026 b5d14f d0e08e " +
  "1f27b0 3440dc 6c43f3 8c69f9 ad92fa fbc80b fbdf2f f0ed2c fbf84f fbfd83 9b4ede c24eeb d26bfb c083fc dba3fe " +
  "2e8044 3aa357 4fad76 62bf88 90d8ab e93630 fd4539 fb6467 fd7979 ff9286 2341a3 2f56cf 2f64f3 638cfd 88b0f4 " +
  "733006 973904 a7412a d05f42 e37654 168bdc 2d9cfb 43b2fe 3bd1fd 6ae6fd 7b5138 955c42 b6704f d7875f f79a6e " +
  "8d8277 b4ad9c cfccba e6decf f3eedc 1b1b1b 303030 454545 5a5a5a 7f7f7f bcbcbc cacaca dadada e6e6e6 f2f2f2 ffffff"
).split(" ");

function Canvas() {
  return (
    <main className="flex min-w-0 flex-1 flex-col">
      <div className="relative mr-[14px] ml-[17px] h-[18px] shrink-0 overflow-hidden border-x border-b border-[#e3e4e8] text-[11px] leading-4 text-[#777]">
        {labelsX.map((x, i) => (
          <span key={x} className="absolute top-0 h-full border-l border-[#e3e4e8] pl-px" style={{ left: x }}>
            {60 + i * 10}
          </span>
        ))}
        {labelsX.map((x) => (
          <span key={x} className="absolute bottom-0 h-[7px] w-px bg-[#e3e4e8]" style={{ left: x + 19 }} />
        ))}
      </div>
      <div className="flex min-h-0 flex-1">
        <div className="relative w-[18px] shrink-0 overflow-hidden border-r border-[#e3e4e8] text-[11px] leading-4 text-[#777]">
          {labelsY.map((y, i) => (
            <span key={y} className="absolute left-0 w-full border-t border-[#e3e4e8] pt-px" style={{ top: y }}>
              <span className="block rotate-180 [writing-mode:vertical-rl]">{30 + i * 10}</span>
            </span>
          ))}
          {labelsY.map((y) => (
            <span key={y} className="absolute right-0 h-px w-[7px] bg-[#e3e4e8]" style={{ top: y + 19 }} />
          ))}
        </div>
        <div className="relative min-w-0 flex-1 overflow-hidden border-r border-b border-[#e3e4e8]">
          <Grid />
          <div className={clsx(node, "top-[247px] left-[90px] border border-[#10164b] bg-white")}>學生</div>
          <div className={clsx(node, "top-[247px] left-[271px] border border-[#10164b] bg-white")}>課程</div>
          <div className={clsx(node, "top-[247px] left-[430px] bg-white")}>
            項目
            <span className="h-[18px] w-px bg-black" />
          </div>
          <div className={clsx(node, "top-[352px] left-[430px] border border-[#10164b] bg-[#ffd8d8]")}>部門</div>
          <Connectors />
          <FloatingToolbar />
          <div className="absolute right-4 bottom-4 flex h-10 w-[89px] items-center rounded-full bg-white shadow-[0_2px_8px_rgba(0,0,0,0.16)]">
            <button type="button" aria-label="AI 魔術棒" className="flex flex-1 justify-center pl-1">
              <svg width="20" height="20" viewBox="0 0 20 20" fill="none" stroke="url(#spark)" strokeWidth="1.6">
                <path d="M4.5 4.5a2 2 0 0 1 3.2-1.5l9 11.5a2 2 0 0 1-3.2 2.8l-8.7-11.3zM5 8.5l3.5-2.5" />
                <path d="M10.5 1v3M9 2.5h3M16.5 5v4M14.5 7h4M2.5 10.5v4M.5 12.5h4" strokeWidth="1.3" />
              </svg>
            </button>
            <Divider className="h-6" />
            <button type="button" aria-label="AI 助手" className="flex flex-1 justify-center pr-1"><Spark /></button>
          </div>
        </div>
        <div className="flex w-[14px] shrink-0 flex-col items-center pt-32">
          <span className="h-[276px] w-[10px] rounded-full bg-[#cfd0d3]" />
        </div>
      </div>
      <div className="flex h-[14px] shrink-0 items-center border-b border-[#e8e9ee]">
        <span className="ml-[277px] h-[10px] w-[396px] rounded-full bg-[#cfd0d3]" />
      </div>
      <div className="flex h-[17px] shrink-0 items-center">
        <button type="button" aria-label="填充顏色" className="flex w-[35px] items-center pl-[11px] text-[#3c3c3c]"><Bucket size={15} /><Caret /></button>
        <div className="flex flex-1 gap-[2px]">
          {palette.map((hex, i) => (
            <button
              key={i}
              type="button"
              aria-label={`#${hex}`}
              className="h-[14px] flex-1 rounded-[2px]"
              style={{ backgroundColor: `#${hex}` }}
            />
          ))}
        </div>
      </div>
    </main>
  );
}

/* ---------- properties ---------- */

const fillModes = ["無填充", "單色填充", "漸變填充", "單色漸變填充", "圖案填充", "圖片或紋理填充"];

function PercentSlider({ id, label, fill, initial }: { id: string; label: string; fill: boolean; initial: number }) {
  const [value, setValue] = useState(initial);
  return (
    <div>
      <label htmlFor={id} className="block leading-5">{label}</label>
      <div className="mt-[9px] flex h-6 items-center justify-between">
        <input
          id={id}
          type="range"
          value={value}
          onChange={(e) => setValue(Number(e.target.value))}
          className="h-1.5 w-[110px] appearance-none rounded-full bg-[#dedede] [&::-webkit-slider-thumb]:size-[14px] [&::-webkit-slider-thumb]:appearance-none [&::-webkit-slider-thumb]:rounded-full [&::-webkit-slider-thumb]:border-2 [&::-webkit-slider-thumb]:border-[#4f9ff5] [&::-webkit-slider-thumb]:bg-white"
          style={fill ? { backgroundImage: `linear-gradient(90deg, #0080ff ${value}%, transparent ${value}%)` } : undefined}
        />
        <div className="flex h-6 w-16 items-center rounded-[5px] border border-[#e8e9ee] pr-1.5">
          <input aria-label={`${label}數值`} defaultValue="0 %" className="w-0 flex-1 pl-[7px] text-sm outline-none" />
          <span className="flex flex-col gap-[7px]"><Caret up big /><Caret big /></span>
        </div>
      </div>
    </div>
  );
}

function Properties() {
  return (
    <>
      <aside className="flex w-[37px] shrink-0 flex-col items-center border-x border-[#e8e9ee] text-[#3c3c3c]">
        <button type="button" aria-label="收合" className="flex h-8 items-center"><ChevronsRight size={20} /></button>
        <button type="button" aria-label="填充" className="flex h-[35px] w-full items-center justify-center bg-[#0080ff] text-white"><Bucket size={20} /></button>
        <button type="button" aria-label="簡報" className="mt-[17px]">
          <Icon size={20}>
            <path d="M0 1.5h18M2.5 2v10.5h13V2M6.5 13L4.5 17M11.5 13L13.5 17" />
            <path d="M7 4.5v5.5L12 7.2z" fill="currentColor" stroke="none" />
          </Icon>
        </button>
        <button type="button" aria-label="說明" className="mt-[25px]"><CircleHelp size={20} strokeWidth={2.2} /></button>
        <button type="button" aria-label="設定" className="mt-auto mb-1.5"><Settings size={20} className="rotate-90" /></button>
      </aside>
      <aside className="w-[235px] shrink-0 bg-[#fdfdfd] text-[13px] text-[#111]">
        <div className="grid h-[33px] grid-cols-3 border-b border-[#e8e9ee] pt-0.5">
          <button type="button" className="font-bold text-[#0080ff]">填充</button>
          <button type="button">線</button>
          <button type="button">陰影</button>
        </div>
        <fieldset className="px-5 pt-[7px] text-[#222]">
          {fillModes.map((mode, i) => (
            <label key={mode} className="flex h-8 items-center gap-2">
              <input
                type="radio"
                name="fill"
                defaultChecked={i === 1}
                className="m-px size-[14px] shrink-0 appearance-none rounded-full border border-[#ddd] bg-white checked:border-4 checked:border-[#0080ff]"
              />
              {mode}
            </label>
          ))}
        </fieldset>
        <div className="flex flex-col gap-4 px-5 pt-2 pr-[17px]">
          <div className="flex h-6 items-center justify-between">
            顏色
            <button type="button" aria-label="顏色" className="h-6 w-16 rounded-[5px] border border-[#ddd] bg-white p-0.5">
              <span className="block h-full rounded-[3px] border border-[#ddd]" />
            </button>
          </div>
          <PercentSlider id="shade" label="陰影/色調" fill initial={50} />
          <PercentSlider id="opacity" label="透明度" fill={false} initial={0} />
        </div>
      </aside>
    </>
  );
}

/* ---------- status bar ---------- */

function StatusBar() {
  return (
    <footer className="flex h-7 shrink-0 items-center bg-[#f2f3f9] pt-1 text-xs text-[#222]">
      <button type="button" aria-label="頁面面板" className="ml-[17px]">
        <Icon><path d="M1 4v11M17 4v11M4 4.5h10v10H4z" strokeWidth="1.2" /></Icon>
      </button>
      <Divider className="ml-[11px] h-6" />
      <select aria-label="頁面" defaultValue="頁-1" className="w-[108px] appearance-none bg-transparent pl-4 text-sm leading-5 outline-none">
        <option>頁-1</option>
      </select>
      <Caret big />
      <Divider className="ml-[13px] h-6" />
      <button type="button" aria-label="新增頁面" className="flex w-10 justify-center"><Plus size={16} strokeWidth={1.3} /></button>
      <Divider className="h-6" />
      <button type="button" className="w-[72px] text-sm leading-5 font-bold text-[#0080ff]">頁-1</button>
      <Divider className="h-6" />
      <div className="ml-auto flex items-center">
        <Divider className="h-6" />
        <span className="w-[83px] pl-2 whitespace-nowrap">形狀數量：4</span>
        <Divider className="h-6" />
        <span className="w-[87px] pl-2 whitespace-nowrap">形狀ID：104</span>
        <Divider className="h-6" />
        <button type="button" aria-label="圖層" className="ml-[11px] flex items-center gap-1"><Layers2 size={18} strokeWidth={1.3} /><Caret /></button>
        <button type="button" className="ml-[15px] flex items-center gap-2 text-[13px]">
          <Icon size={16} width={1.2}>
            <path d="M1 5V1.5h4M13 1.5h4V5M17 13v3.5h-4M5 16.5H1V13M6 5h4l2.5 2.5V13H6z" />
          </Icon>
          專注
        </button>
        <button type="button" aria-label="播放" className="ml-3"><CirclePlay size={17} strokeWidth={1.3} /></button>
        <Divider className="ml-[11px] h-6" />
        <button type="button" aria-label="縮小" className="ml-2"><Minus size={16} strokeWidth={1.3} /></button>
        <input
          aria-label="縮放"
          type="range"
          min={10}
          max={400}
          defaultValue={95}
          className="ml-2 h-[3px] w-[97px] appearance-none rounded-full bg-[linear-gradient(90deg,#444_24%,#fafafc_24%)] [&::-webkit-slider-thumb]:size-[13px] [&::-webkit-slider-thumb]:appearance-none [&::-webkit-slider-thumb]:rounded-full [&::-webkit-slider-thumb]:border-2 [&::-webkit-slider-thumb]:border-[#444] [&::-webkit-slider-thumb]:bg-[#f2f3f9]"
        />
        <button type="button" aria-label="放大" className="ml-2"><Plus size={16} strokeWidth={1.3} /></button>
        <button type="button" className="ml-4 flex items-center gap-2 text-[13px]">100%<Caret /></button>
        <Divider className="ml-3 h-6" />
        <button type="button" aria-label="導覽圖" className="ml-3"><MapIcon size={17} strokeWidth={1.3} /></button>
        <button type="button" aria-label="符合視窗" className="mr-[17px] ml-4">
          <Icon size={15} width={1.3}>
            <path d="M1 5V1h4M13 1h4v4M17 13v4h-4M5 17H1v-4M5 6h8v6H5z" />
          </Icon>
        </button>
      </div>
    </footer>
  );
}

export default function App() {
  return (
    <div className="flex h-screen flex-col overflow-hidden bg-[#fdfdfd] font-['Noto_Sans','Noto_Sans_CJK_TC',sans-serif]">
      <TitleBar />
      <MenuBar />
      <Ribbon />
      <div className="flex min-h-0 flex-1">
        <LeftRail />
        <SymbolPanel />
        <Canvas />
        <Properties />
      </div>
      <StatusBar />
    </div>
  );
}
